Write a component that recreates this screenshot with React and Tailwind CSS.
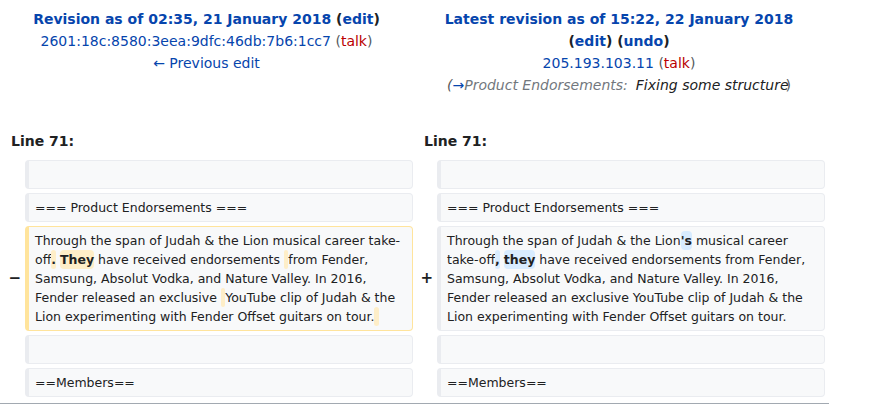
import React from 'react';

const ctx = "bg-[#f8f9fa] border border-l-4 border-[#eaecf0] rounded-[4px] py-[4px] pl-[6px] pr-[6px] min-h-[29px] leading-[19px] text-[12.5px] whitespace-pre-wrap break-words";
const del = "bg-[#feeec8] rounded-[4px] font-bold py-[2px]";
const ins = "bg-[#d8ecff] rounded-[4px] font-bold py-[2px]";

const Marker = ({ sign }) => (
    <div className="flex items-center justify-end pr-[4px] text-[15px] font-bold leading-none">{sign}</div>
);

const ContextRow = ({ text }) => (
    <>
        <div />
        <div className={ctx}>{text}</div>
        <div />
        <div className={ctx}>{text}</div>
    </>
);

const App = () => {
    return (
        <div className="w-[874px] h-[420px] overflow-hidden bg-white text-[#202122] font-['DejaVu_Sans',sans-serif]">
            <div className="w-[829px] border-b border-[#a2a9b1] pb-[6px]">
                {/* revision headers */}
                <div className="grid grid-cols-[413px_412px] pt-[8px] text-[14px] leading-[22px] text-center">
                    <div>
                        <div className="font-bold">
                            <span className="text-[#0645ad]">Revision as of 02:35, 21 January 2018</span>{' '}
                            (<span className="text-[#0645ad]">edit</span>)
                        </div>
                        <div>
                            <span className="text-[#0645ad]">2601:18c:8580:3eea:9dfc:46db:7b6:1cc7</span>{' '}
                            <span className="text-[#54595d]">(</span><span className="text-[#ba0000]">talk</span><span className="text-[#54595d]">)</span>
                        </div>
                        <div className="text-[#0645ad]">← Previous edit</div>
                    </div>
                    <div>
                        <div className="font-bold px-[20px]">
                            <span className="text-[#0645ad]">Latest revision as of 15:22, 22 January 2018</span>{' '}
                            (<span className="text-[#0645ad]">edit</span>) (<span className="text-[#0645ad]">undo</span>)
                        </div>
                        <div>
                            <span className="text-[#0645ad]">205.193.103.11</span>{' '}
                            <span className="text-[#54595d]">(</span><span className="text-[#ba0000]">talk</span><span className="text-[#54595d]">)</span>
                        </div>
                        <div className="italic">
                            <span className="text-[#54595d]">(</span>
                            <span className="text-[#0645ad]">→</span>
                            <span className="text-[#72777d]">Product Endorsements:</span>
                            <span className="ml-[8px]">Fixing some structure</span>
                            <span className="not-italic text-[#54595d] ml-[-3px]">)</span>
                        </div>
                    </div>
                </div>

                {/* line numbers */}
                <div className="grid grid-cols-[413px_412px] mt-[36px] text-[14px] leading-[19px] font-bold">
                    <div className="pl-[11px]">Line 71:</div>
                    <div className="pl-[11px]">Line 71:</div>
                </div>

                {/* diff rows */}
                <div className="grid grid-cols-[25px_388px_24px_388px] gap-y-[4px] mt-[9px]">
                    <ContextRow text="" />
                    <ContextRow text="=== Product Endorsements ===" />

                    <Marker sign="−" />
                    <div className={ctx + " border-[#ffe49c]"}>
                        Through the span of Judah &amp; the Lion musical career take-off<span className={del}>.</span> <span className={del}>They</span> have received endorsements <span className={del}> </span>from Fender, Samsung, Absolut Vodka, and Nature Valley. In 2016, Fender released an exclusive <span className={del}> </span>YouTube clip of Judah &amp; the Lion experimenting with Fender Offset guitars on tour.<span className={del}> </span>
                    </div>
                    <Marker sign="+" />
                    <div className={ctx + " border-[#a3d3ff]"}>
                        Through the span of Judah &amp; the Lion<span className={ins}>'s</span> musical career take-off<span className={ins}>,</span> <span className={ins}>they</span> have received endorsements from Fender, Samsung, Absolut Vodka, and Nature Valley. In 2016, Fender released an exclusive YouTube clip of Judah &amp; the Lion experimenting with Fender Offset guitars on tour.
                    </div>

                    <ContextRow text="" />
                    <ContextRow text="==Members==" />
                </div>
            </div>
        </div>
    );
};

export default App;
